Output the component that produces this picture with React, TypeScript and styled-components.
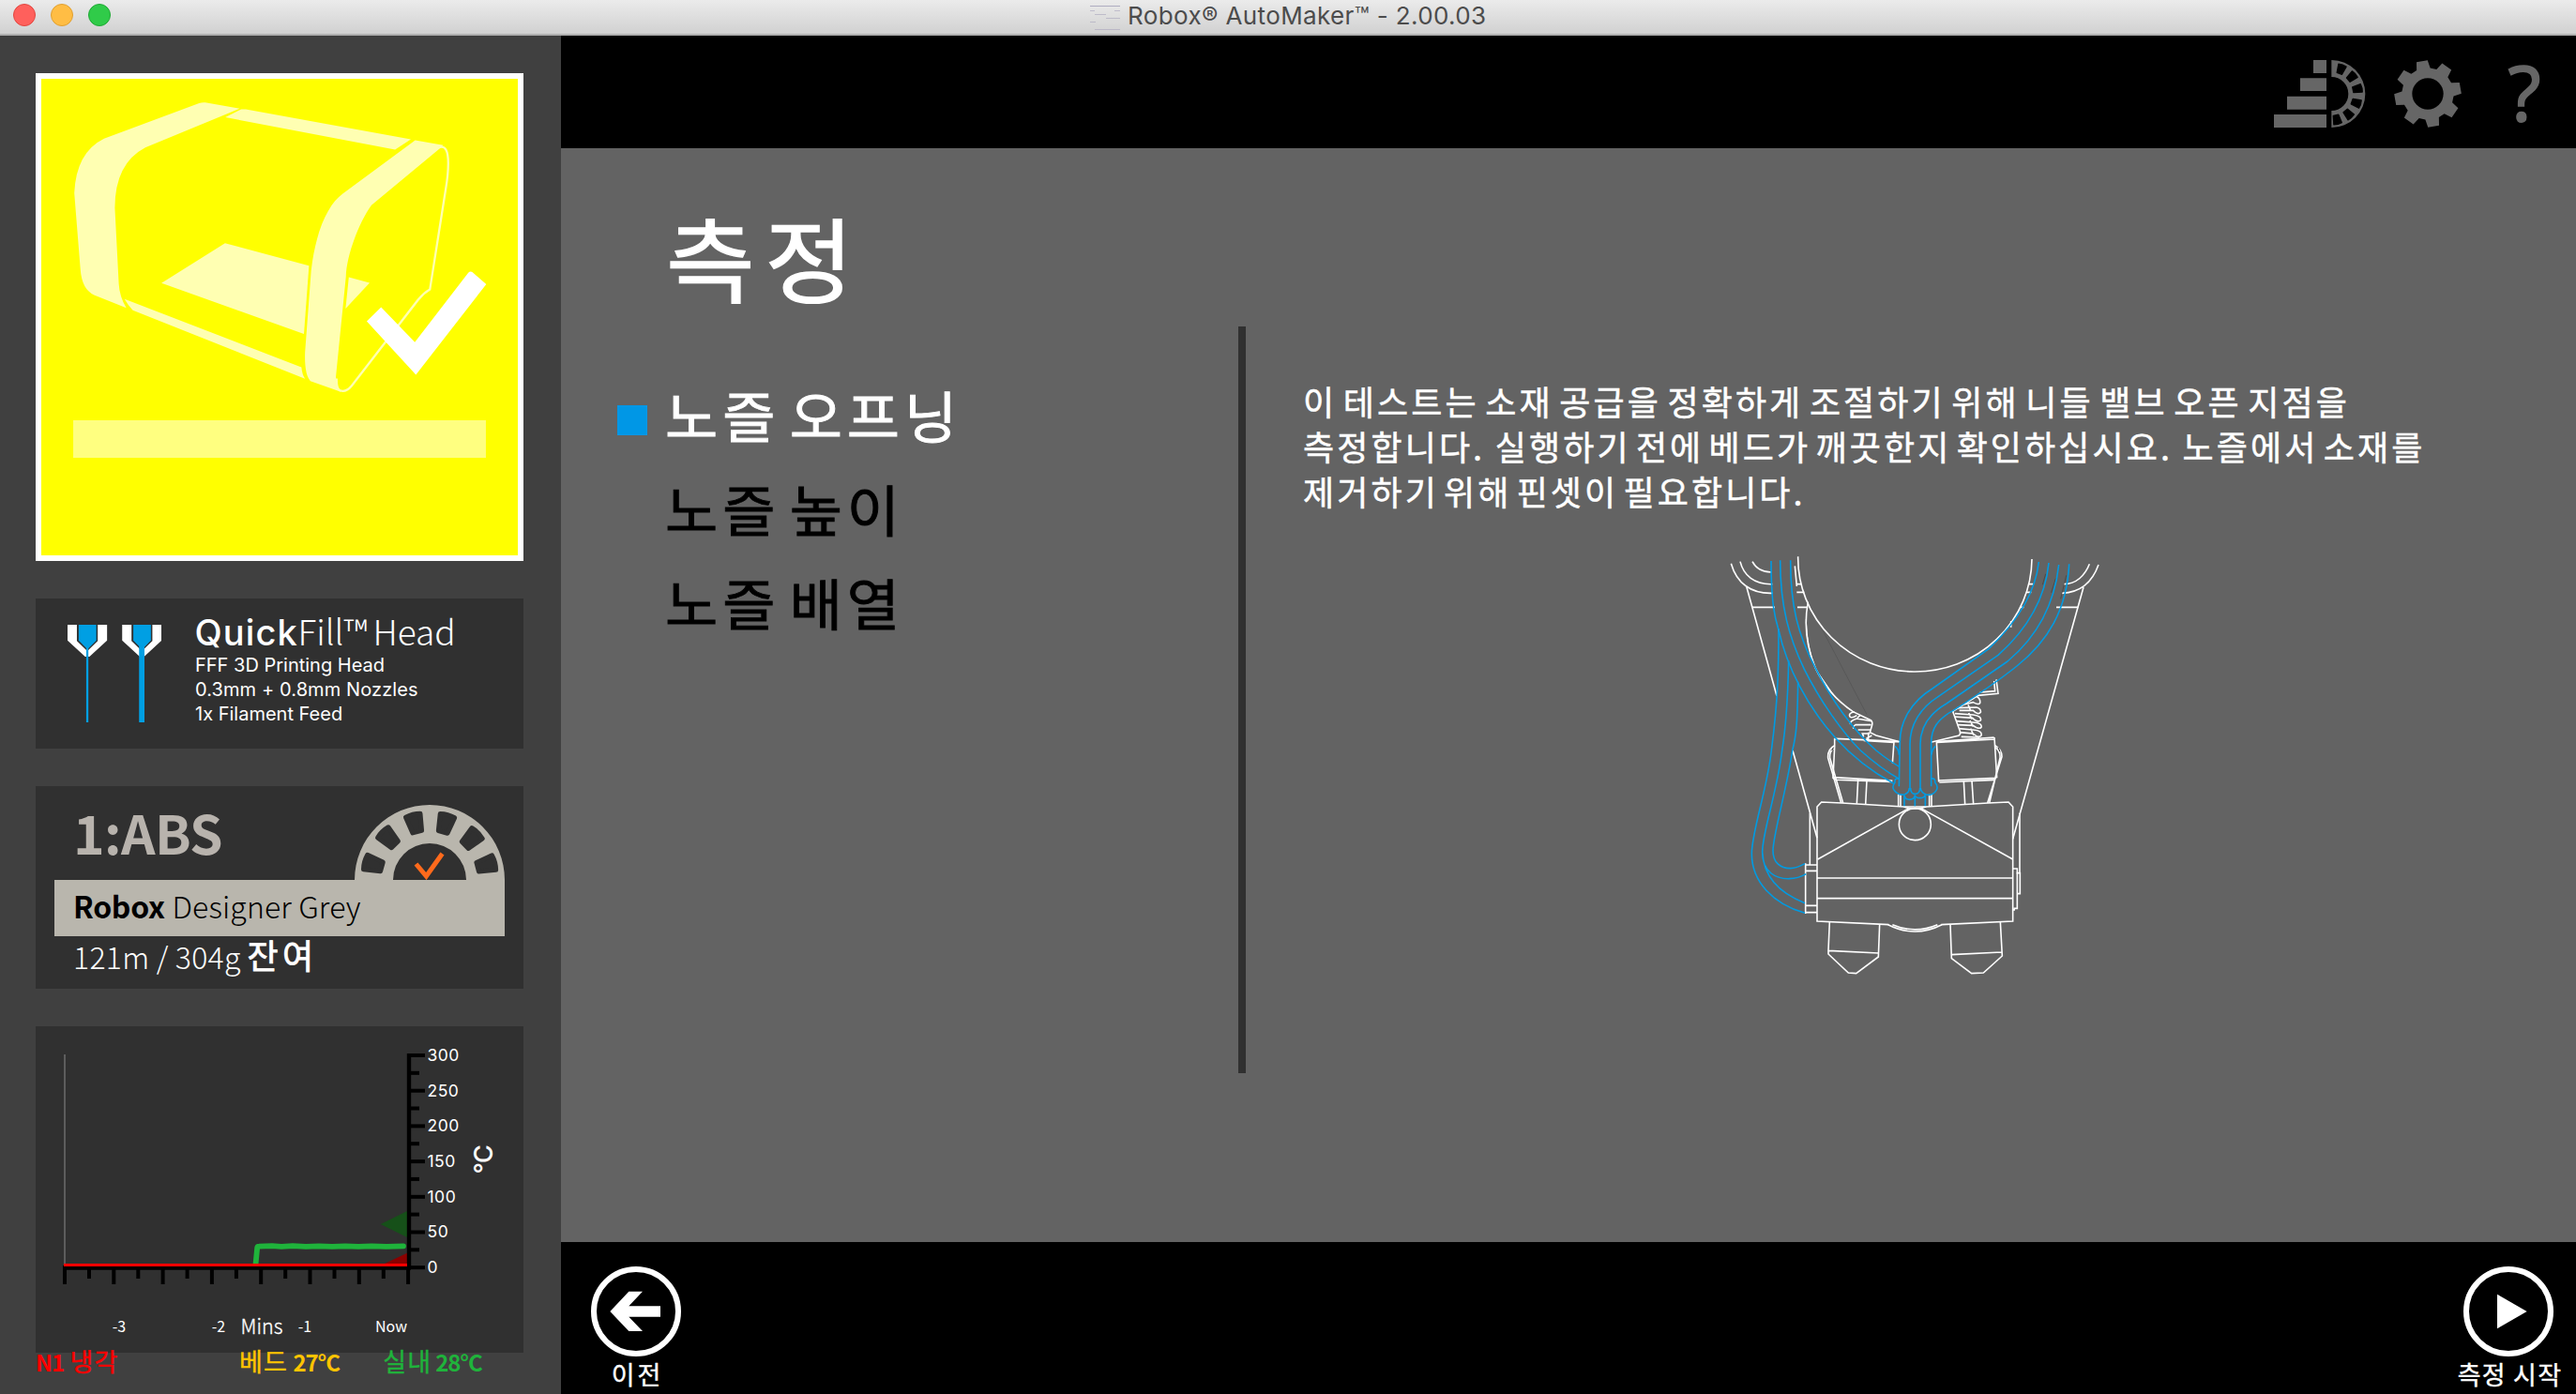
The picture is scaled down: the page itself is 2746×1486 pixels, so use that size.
import React from 'react';
import styled, { createGlobalStyle } from 'styled-components';

const noto = '"Noto Sans CJK KR", "Noto Sans", sans-serif';
const inter = 'Inter, "Noto Sans CJK KR", sans-serif';

const Global = createGlobalStyle`
  html, body { margin: 0; padding: 0; background: #636363; }
  body { font-family: ${noto}; color: #fff; overflow: hidden; }
  *, *::before, *::after { box-sizing: border-box; }
  svg { display: block; flex: none; }
`;

/* ---------- window ---------- */
const Window = styled.div`
  display: flex;
  flex-direction: column;
  width: 2746px;
  height: 1486px;
`;
const TitleBar = styled.header`
  display: flex;
  align-items: flex-start;
  height: 38px;
  padding-left: 14px;
  background: linear-gradient(#ebebeb, #d1d1d1);
  border-bottom: 2px solid #b0b0b0;
`;
const Light = styled.span<{ $fill: string; $edge: string }>`
  width: 24px;
  height: 24px;
  margin: 4px 16px 0 0;
  border-radius: 50%;
  background: ${(p) => p.$fill};
  border: 1px solid ${(p) => p.$edge};
`;
const DocIcon = styled.svg`
  margin: 5px 8px 0 1028px;
`;
const WindowTitle = styled.h1`
  margin: 0;
  font: 400 26px/34px ${inter};
  letter-spacing: 0.38px;
  color: #4c4c4c;
  white-space: pre;
`;
const Body = styled.div`
  display: flex;
  flex: 1;
  min-height: 0;
`;

/* ---------- sidebar ---------- */
const Sidebar = styled.aside`
  display: flex;
  flex-direction: column;
  gap: 40px;
  width: 598px;
  padding: 40px 40px 0 38px;
  background: #404040;
`;
const StatusTile = styled.section`
  flex: none;
  height: 520px;
  border: 6px solid #fff;
  background: #ff0;
`;
const Card = styled.section<{ $h: number }>`
  display: flex;
  flex: none;
  height: ${(p) => p.$h}px;
  background: #303030;
`;
const HeadCard = styled(Card)`
  padding: 13.6px 0 0 34px;
  gap: 35.5px;
`;
const Nozzles = styled.svg`
  margin-top: 14.4px;
`;
const HeadName = styled.div`
  display: flex;
  align-items: baseline;
  height: 44px;
  font: 300 37px/40px ${noto};
  white-space: pre;
`;
const Quick = styled.span`
  width: 110px;
  font-family: ${inter};
  font-size: 38px;
  font-weight: 500;
  letter-spacing: 1.1px;
`;
const Fill = styled.span`
  width: 80px;
`;
const HeadWord = styled.span`
  letter-spacing: 0;
`;
const HeadLine = styled.div<{ $track?: number }>`
  padding-left: 0.5px;
  font: 400 20px/26px ${inter};
  letter-spacing: ${(p) => p.$track ?? 0}px;
`;

const MaterialCard = styled(Card)`
  flex-direction: column;
  padding: 18px 20px 0;
`;
const MaterialTop = styled.div`
  display: flex;
  justify-content: space-between;
  height: 82px;
  padding-left: 20px;
`;
const MaterialCode = styled.div`
  font: 700 57px/60px ${noto};
  letter-spacing: -0.6px;
  color: #b8b3ad;
`;
const ReelIcon = styled.svg`
  margin-top: 2px;
`;
const Banner = styled.div`
  display: flex;
  align-items: center;
  height: 60px;
  padding: 0 0 5px 20px;
  background: #b9b6ad;
  color: #000;
  font-size: 32px;
  line-height: 55px;
  white-space: pre;
`;
const Brand = styled.b`
  width: 105.4px;
  letter-spacing: -0.3px;
`;
const Colour = styled.span`
  font-weight: 300;
  letter-spacing: 0.14px;
`;
const Remaining = styled.div`
  display: flex;
  align-items: baseline;
  margin-top: -1px;
  padding-left: 20px;
  font: 300 32px/40px ${noto};
`;
const Amount = styled.span`
  width: 185.6px;
  letter-spacing: 0.26px;
  white-space: pre;
`;
const Left = styled.span`
  font-size: 36px;
  font-weight: 400;
  letter-spacing: 4.4px;
  -webkit-text-stroke: 0.8px #fff;
`;

const Readings = styled.div`
  display: flex;
  margin-top: -46px;
  font: 400 27px/30px ${noto};
`;
const Reading = styled.div<{ $w: number; $c: string }>`
  display: flex;
  align-items: baseline;
  flex: none;
  width: ${(p) => p.$w}px;
  color: ${(p) => p.$c};
  -webkit-text-stroke: 0.4px ${(p) => p.$c};
`;
const Cell = styled.span<{ $w?: number }>`
  width: ${(p) => (p.$w ? `${p.$w}px` : 'auto')};
  letter-spacing: 1.1px;
`;
const Bold = styled.b<{ $w?: number; $track: number }>`
  width: ${(p) => (p.$w ? `${p.$w}px` : 'auto')};
  font-size: 24px;
  letter-spacing: ${(p) => p.$track}px;
  -webkit-text-stroke: 0;
`;

/* ---------- main ---------- */
const Main = styled.main`
  display: flex;
  flex-direction: column;
  flex: 1;
`;
const Toolbar = styled.nav`
  display: flex;
  align-items: center;
  justify-content: flex-end;
  height: 120px;
  padding: 4px 36.5px 0 0;
  background: #000;
`;
const GearIcon = styled.svg`
  margin: 0 49.5px 0 30px;
`;
const Help = styled.span`
  width: 36px;
  padding-bottom: 4px;
  font: 400 81px/100px 'Open Sans', sans-serif;
  color: #666;
  -webkit-text-stroke: 2px #666;
`;
const Content = styled.div`
  display: flex;
  flex: 1;
  background: #636363;
`;
const Steps = styled.section`
  display: flex;
  flex-direction: column;
  width: 722px;
  padding: 64px 0 0 60px;
`;
const Heading = styled.h2`
  margin: 0 0 70px 52px;
  font: 400 98px/100px ${noto};
  letter-spacing: 10px;
  -webkit-text-stroke: 1.4px #fff;
  transform: scaleX(1.05);
  transform-origin: left;
`;
const Step = styled.div<{ $active?: boolean }>`
  display: flex;
  align-items: center;
  height: 100px;
  font: 400 59px/100px ${noto};
  color: ${(p) => (p.$active ? '#fff' : '#000')};
`;
const StepName = styled.span`
  letter-spacing: 4.8px;
  word-spacing: -8px;
  -webkit-text-stroke: 0.9px currentColor;
  transform: scaleX(1.035);
  transform-origin: left;
`;
const Marker = styled.span<{ $on?: boolean }>`
  width: 32px;
  height: 32px;
  margin: 12px 19px 0 0;
  background: ${(p) => (p.$on ? '#0097e6' : 'transparent')};
`;
const Divider = styled.div`
  width: 8px;
  height: 796px;
  margin-top: 190px;
  background: #303030;
`;
const Detail = styled.section`
  display: flex;
  flex-direction: column;
  padding: 245.3px 0 0 61px;
`;
const Paragraph = styled.div`
  font: 400 36px/48px ${noto};
  -webkit-text-stroke: 0.5px #fff;
`;
const Line = styled.div<{ $word: number }>`
  letter-spacing: 3.1px;
  word-spacing: ${(p) => p.$word}px;
  white-space: pre;
`;
const Machine = styled.svg`
  margin: 32.7px 0 0 431px;
`;
const Footer = styled.footer`
  display: flex;
  justify-content: space-between;
  height: 162px;
  padding: 26px 17px 0 30px;
  background: #000;
`;
const RoundButton = styled.button<{ $w: number; $track: number }>`
  display: flex;
  flex-direction: column;
  align-items: center;
  gap: 3px;
  width: ${(p) => p.$w}px;
  padding: 0;
  border: 0;
  background: none;
  color: #fff;
  font: 400 27px/31px ${noto};
  letter-spacing: ${(p) => p.$track}px;
  white-space: pre;
`;
const ButtonText = styled.span`
  padding-left: 3px;
  -webkit-text-stroke: 0.4px #fff;
`;

/* ---------- drawings ---------- */
const PrinterArt = () => (
  <svg width="508" height="508" viewBox="115 212 1328 1285" preserveAspectRatio="none">
    <g fill="#ffffb2">
      <path d="M572 276L668 292L405 397Q320 440 320 560L331 765Q333 800 352 830L262 795Q228 780 224 725L207 520Q212 410 290 373L555 278Q563 275 572 276Z" />
      <path d="M672 294H685L1145 375L1101 403L628 316Z" />
      <path d="M1157 378L1235 391L1228 398L1035 553C1000 600 965 690 964 745L936 1015Q936 1045 950 1056L865 1027Q848 1010 850 950L867 730C880 620 915 550 955 522Z" />
      <path d="M627 655L861 716L847 900L450 763Z" />
      <path d="M972 747L1030 762L963 832Z" />
      <path d="M347 806L840 990Q842 1010 850 1021L370 836Q358 825 347 806Z" />
    </g>
    <path d="M1224 397Q1249 388 1249 440Q1249 470 1242 510L1198 780Q1180 790 1165 808L980 1040Q965 1058 948 1053Q937 1048 938 1020" fill="none" stroke="#ffffb2" strokeWidth="6" />
    <path d="M1062 828L1156 922L1305 735Q1310 730 1316 733L1355 766L1159 1010L1022 866Z" fill="#fff" />
    <path d="M204 1133H1354V1234H204Z" fill="#ffff80" />
  </svg>
);

const NozzleArt = () => (
  <Nozzles width="100" height="104" viewBox="188 138 261 312" preserveAspectRatio="none">
    {[0, 152].map((dx) => (
      <g key={dx} transform={`translate(${dx} 0)`}>
        <path d="M188 138H214V190L243 222L272 190V138H298V188L249 240H237L188 188Z" fill="#fff" />
        <path d="M219 138H268V188L246 214H241L219 188Z" fill="#009fe3" />
      </g>
    ))}
    <path d="M240 205H246V450H240Z M387 205H402V450H387Z" fill="#009fe3" />
  </Nozzles>
);

const ReelArt = () => (
  <ReelIcon width="160" height="80" viewBox="-80 -80 160 80">
    <path d="M-80 0A80 80 0 0 1 80 0H39A39 39 0 0 0 -39 0Z" fill="#b9b6ad" />
    {[-164.5, -134.5, -104.5, -74.5, -44.5, -15].map((a) => (
      <path key={a} transform={`rotate(${a})`} d="M53 -5L71 -8Q73 0 71 8L53 5Z" fill="#303030" stroke="#303030" strokeWidth="5" strokeLinejoin="round" />
    ))}
    <path d="M-14.5 -17L-3.6 -4L13.5 -28" fill="none" stroke="#ff6a1c" strokeWidth="5" />
  </ReelIcon>
);

const StackReelIcon = () => (
  <svg width="98" height="72" viewBox="132 72 294 216">
    <path fill="#666" d="M258 72H300V114H258Z M216 130H300V171H216Z M174 188H300V230H174Z M132 246H300V288H132Z" />
    <path fill="#666" d="M316 72A108 108 0 0 1 316 288V234A54 54 0 0 0 316 126Z" />
    {[-69, -40, -11, 20, 50, 78].map((a) => (
      <path key={a} transform={`translate(316 180) rotate(${a})`} d="M70 -8L97 -13Q101 0 98 13L70 9Z" fill="#000" stroke="#000" strokeWidth="4" strokeLinejoin="round" />
    ))}
  </svg>
);

const gearPoints = Array.from({ length: 8 }, (_, k) => {
  const a = ((-10 + 45 * k) * Math.PI) / 180;
  return [[80, -22], [106, -18], [106, 18], [80, 22]]
    .map(([r, s]) => `${(r * Math.cos(a) - s * Math.sin(a)).toFixed(1)},${(r * Math.sin(a) + s * Math.cos(a)).toFixed(1)}`)
    .join(' ');
}).join(' ');

const Gear = () => (
  <GearIcon width="72" height="72" viewBox="-108 -108 216 216">
    <polygon points={gearPoints} fill="#666" />
    <circle r="50" fill="#000" />
  </GearIcon>
);

const majors = [0, 1, 2, 3, 4, 5, 6];
const Chart = () => (
  <svg width="520" height="348" viewBox="38 1094 520 348">
    <path d="M69 1124V1348" stroke="#6a6a6a" strokeWidth="1.6" />
    <path d="M405.7 1305L434 1291V1319Z" fill="#165019" />
    <path d="M409 1347.5L434 1335.7V1348Z" fill="#8b0000" />
    <path d="M272.4 1349L274.2 1330Q274.4 1328.6 276 1328.6L290 1328.2L300 1328.9L312 1328.2L326 1328.9L340 1328.3L354 1328.9L368 1328.3L382 1328.9L396 1328.3L412 1328.9L430 1328.4" fill="none" stroke="#1fb33b" strokeWidth="5.8" strokeLinecap="round" />
    <path d="M67 1351.5H438M436 1123V1353" stroke="#000" strokeWidth="4.4" />
    {majors.map((i) => (
      <React.Fragment key={i}>
        <path d={`M434 ${1125 + i * 37.7}h19`} stroke="#000" strokeWidth="4" />
        {i < 6 && <path d={`M434 ${1143.8 + i * 37.7}h13`} stroke="#000" strokeWidth="4" />}
        <text x="455.5" y={1131 + i * 37.65} fill="#fff" fontFamily={inter} fontSize="17.5" letterSpacing="0.5">
          {300 - i * 50}
        </text>
      </React.Fragment>
    ))}
    {[0, 1, 2, 3, 4, 5, 6, 7].map((i) => (
      <React.Fragment key={i}>
        <path d={`M${69 + i * 52.3} 1349v20`} stroke="#000" strokeWidth="4" />
        {i < 7 && <path d={`M${95 + i * 52.3} 1349v14`} stroke="#000" strokeWidth="4" />}
      </React.Fragment>
    ))}
    <path d="M68 1348.4H434" stroke="#f00" strokeWidth="3" />
    <g fill="#fff" fontFamily={noto} fontSize="16" textAnchor="middle">
      <text x="127" y="1420">-3</text>
      <text x="233" y="1420">-2</text>
      <text x="325" y="1420">-1</text>
      <text x="417" y="1420">Now</text>
      <text x="279" y="1421.7" fontSize="21.5" fontWeight="300" stroke="#fff" strokeWidth="0.3">Mins</text>
      <text transform="translate(525 1236) rotate(-90)" fontFamily={inter} fontSize="27" fontWeight="500" letterSpacing="-0.5">°C</text>
    </g>
  </svg>
);

const MachineArt = () => (
  <Machine width="440" height="480" viewBox="0 0 1320 1440" fill="none" strokeWidth="4.8">
    <path d="M324 190L510 545" stroke="#4c4c4c" strokeWidth="1.5" />
    <g stroke="#fff">
      <path d="M290 40A374 364 0 0 0 1038 48" />
      <path d="M322 185C308 260 318 330 345 395C375 460 420 505 466 536L524 564Q530 570 526 582L520 602L540 612L615 632" />
      <path d="M316 240C318 320 335 375 350 405L402 480" strokeWidth="3" />
      <path d="M280 70L286 135M286 128H300M286 154H310M288 202H320M144 202H216M1000 202H1012M1116 202H1186M1020 154H1036M1028 128H1042M971 246V266" />
      <path d="M76 62C94 125 140 160 210 157M105 56C116 100 150 130 208 128M144 56Q162 90 205 90" />
      <path d="M1251 66C1230 125 1190 155 1134 157M1222 64C1208 100 1180 128 1140 128" />
      <path d="M125 135L222 485M273 660L351 940M1203 138L977 943" />
      {/* springs */}
      <path d="M470 536Q450 540 456 552Q462 558 478 548M526 566L478 558Q454 566 458 576M524 578H474Q464 584 468 590M522 594L482 594M520 606L496 606L500 616M526 612L508 622M480 556L490 546M515 602V624" />
      <path d="M865 484L930 478L924 433M872 474L920 470L917 438M866 484L785 535L810 604L805 612L715 634" />
      <path d="M862 488Q874 494 872 508Q868 516 850 506L822 512M800 524L860 522Q876 526 874 538Q866 548 850 532L806 532M792 542L850 546Q878 550 874 564Q864 572 848 556L790 552M796 566L850 570Q880 572 876 586Q868 594 850 580L800 578M804 590L850 594Q880 596 876 612Q868 622 850 606L806 602M812 616L870 618M834 514L842 532M836 540L846 560M840 564L850 584M842 590L852 612" />
      {/* motor blocks */}
      <path d="M407 622L500 626L613 632M407 622V648L402 748L410 754L590 760M404 746L592 757M597 632L592 700M500 628L596 634" />
      <path d="M917 618L733 632M920 624L735 634M733 632L740 760M918 618L926 748M740 756L924 748M742 762L920 754" />
      <path d="M407 644Q384 656 386 684L428 828M407 650Q390 662 392 684L434 828M920 644Q942 656 942 680L896 828M920 650Q938 662 936 684L902 828" />
      <path d="M482 752L478 830M510 755L506 834M611 800V838M618 802V838M710 800V838M717 800V838M820 758L824 832M846 757L851 832" />
      {/* carriage body */}
      <path d="M580 1217L351 1206V840L365 825L430 828L628 840H700L898 828L963 825L977 840V1206L748 1217" />
      <path d="M351 1068H977M351 1133H977M646 844L353 1008M682 844L977 1008M628 840Q664 852 700 840" />
      <circle cx="664" cy="896" r="51" />
      <path d="M578 1217Q664 1261 750 1217M592 1217Q664 1248 736 1217" />
      <path d="M391 1208L387 1300V1311L451 1371L476 1373L547 1320L551 1216M387 1300L547 1308" />
      <path d="M777 1216L781 1325L845 1373L883 1371L943 1317L937 1208M781 1313L941 1305" />
      <path d="M314 1021V1182M314 1026H351M314 1045H351M314 1156H351M314 1178H351M328 860V1026" />
      <path d="M999 860V1052M977 1038H991V1165H979M988 1052H1000V1118H991M977 1170H984" />
    </g>
    <path d="M398 660L404 650M930 650L936 664" stroke="#222" strokeWidth="3" />
    <path d="M1082 95L1072 130M1114 110L1100 155M1148 100L1130 175" stroke="#333" strokeWidth="1.5" />
    <g stroke="#009be2">
      <path d="M204 54C204 190 216 235 228 275C255 395 320 520 410 620C460 675 530 730 595 765" />
      <path d="M233 52C233 200 262 300 310 400C360 500 430 600 490 660Q555 718 612 750" />
      <path d="M266 52C266 200 290 290 345 395C395 495 465 595 540 660Q580 692 614 712" />
      <path d="M228 270C228 400 226 500 205 660C190 790 142 920 142 990C142 1080 210 1150 312 1180" />
      <path d="M260 372C258 480 252 580 239 660C222 800 176 920 176 985C176 1050 220 1071 262 1070Q290 1070 316 1055M176 985C180 1070 240 1120 312 1148" />
      <path d="M290 440C288 540 288 600 272 660C255 780 210 930 210 980C210 1020 235 1037 265 1037Q285 1037 312 1022" />
      <path d="M1060 57C1050 150 1000 240 900 335L720 462C650 505 616 570 616 632L613 775" />
      <path d="M1092 60C1080 180 1020 275 930 355L735 490C680 525 648 580 648 640V780" />
      <path d="M1124 66C1110 195 1050 300 960 375L765 510C705 545 681 590 681 640V780" />
      <path d="M1157 64C1150 210 1090 310 990 390C940 430 860 485 790 530C735 560 715 590 716 640V775" />
      <path d="M600 646Q612 655 613 674M730 646Q719 655 717 674" />
      <path d="M612 750Q598 748 600 762Q590 775 596 785Q610 806 632 800Q646 795 646 780M650 780Q650 799 664 799Q680 799 680 780M716 750Q730 748 728 762Q740 775 732 788Q720 806 700 801Q684 796 682 780" />
      <path d="M630 802Q632 817 646 817Q662 817 664 802Q666 812 680 812Q694 812 696 802M630 802V838M664 808V838M697 802V838" />
    </g>
  </Machine>
);

const steps = ['노즐 오프닝', '노즐 높이', '노즐 배열'];

export default function App() {
  return (
    <Window>
      <Global />
      <TitleBar>
        <Light $fill="#ff605c" $edge="#e2463f" />
        <Light $fill="#ffbd44" $edge="#e0a032" />
        <Light $fill="#30cb49" $edge="#1fa934" />
        <DocIcon width="32" height="28" viewBox="0 0 32 28" stroke="#a9a5bd" strokeWidth="1" opacity="0.6">
          <path d="M0 1.5H32" stroke="#8b88a8" />
          <path d="M0 6.5H5M26 6.5H32M5 10.5H17M17 14.5H32M0 18.5H6" />
          <path d="M5 26.5H32" />
        </DocIcon>
        <WindowTitle>Robox® AutoMaker™ - 2.00.03</WindowTitle>
      </TitleBar>
      <Body>
        <Sidebar>
          <StatusTile>
            <PrinterArt />
          </StatusTile>
          <HeadCard $h={160}>
            <NozzleArt />
            <div>
              <HeadName>
                <Quick>Quick</Quick>
                <Fill>Fill™</Fill>
                <HeadWord>Head</HeadWord>
              </HeadName>
              <HeadLine>FFF 3D Printing Head</HeadLine>
              <HeadLine $track={0.1}>0.3mm + 0.8mm Nozzles</HeadLine>
              <HeadLine>1x Filament Feed</HeadLine>
            </div>
          </HeadCard>
          <MaterialCard $h={216}>
            <MaterialTop>
              <MaterialCode>1:ABS</MaterialCode>
              <ReelArt />
            </MaterialTop>
            <Banner>
              <Brand>Robox</Brand>
              <Colour>Designer Grey</Colour>
            </Banner>
            <Remaining>
              <Amount>121m / 304g</Amount>
              <Left>잔여</Left>
            </Remaining>
          </MaterialCard>
          <Card $h={348}>
            <Chart />
          </Card>
          <Readings>
            <Reading $w={217} $c="#f00">
              <Bold $w={36.5} $track={-0.9}>N1</Bold>
              <Cell>냉각</Cell>
            </Reading>
            <Reading $w={153.2} $c="#ffc400">
              <Cell $w={57.5}>베드</Cell>
              <Bold $track={-1.1}>27°C</Bold>
            </Reading>
            <Reading $w={120} $c="#1fb33b">
              <Cell $w={56}>실내</Cell>
              <Bold $track={-1.1}>28°C</Bold>
            </Reading>
          </Readings>
        </Sidebar>
        <Main>
          <Toolbar>
            <StackReelIcon />
            <Gear />
            <Help>?</Help>
          </Toolbar>
          <Content>
            <Steps>
              <Heading>측정</Heading>
              {steps.map((s, i) => (
                <Step key={s} $active={i === 0}>
                  <Marker $on={i === 0} />
                  <StepName>{s}</StepName>
                </Step>
              ))}
            </Steps>
            <Divider />
            <Detail>
              <Paragraph>
                <Line $word={-4.6}>이 테스트는 소재 공급을 정확하게 조절하기 위해 니들 밸브 오픈 지점을</Line>
                <Line $word={-5.9}>{'측정합니다.  실행하기 전에 베드가 깨끗한지 확인하십시요.  노즐에서 소재를'}</Line>
                <Line $word={-6}>제거하기 위해 핀셋이 필요합니다.</Line>
              </Paragraph>
              <MachineArt />
            </Detail>
          </Content>
          <Footer>
            <RoundButton $w={100} $track={3}>
              <svg width="96" height="96" viewBox="90 150 288 288">
                <circle cx="234" cy="294" r="135" fill="none" stroke="#fff" strokeWidth="18" />
                <path d="M151 294L211 230H255L211 277H312V311H211L255 357H211Z" fill="#fff" />
              </svg>
              <ButtonText>이전</ButtonText>
            </RoundButton>
            <RoundButton $w={110} $track={1.2}>
              <svg width="96" height="96" viewBox="240 150 288 288">
                <circle cx="384" cy="294" r="135" fill="none" stroke="#fff" strokeWidth="18" />
                <path d="M348 239L443 294L348 349Z" fill="#fff" />
              </svg>
              <ButtonText>측정 시작</ButtonText>
            </RoundButton>
          </Footer>
        </Main>
      </Body>
    </Window>
  );
}
